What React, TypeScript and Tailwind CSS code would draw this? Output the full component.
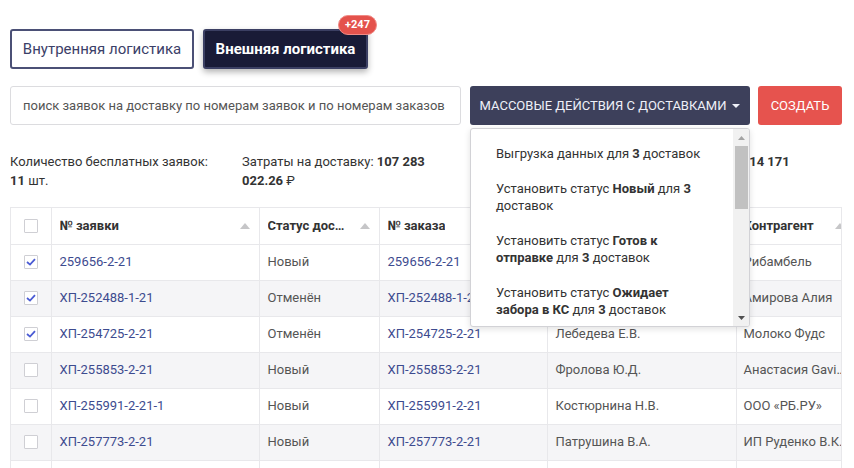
// Deliveries list: logistics tabs, search + bulk actions dropdown, stats and table.

import type { ReactNode } from 'react'

type Row = {
  id: string
  status: string
  order: string
  courier: string
  agent: string
  checked: boolean
}

const ROWS: Row[] = [
  { id: '259656-2-21', status: 'Новый', order: '259656-2-21', courier: 'Сидорова А.А.', agent: 'Рибамбель', checked: true },
  { id: 'ХП-252488-1-21', status: 'Отменён', order: 'ХП-252488-1-21', courier: 'Иванова М.С.', agent: 'Амирова Алия', checked: true },
  { id: 'ХП-254725-2-21', status: 'Отменён', order: 'ХП-254725-2-21', courier: 'Лебедева Е.В.', agent: 'Молоко Фудс', checked: true },
  { id: 'ХП-255853-2-21', status: 'Новый', order: 'ХП-255853-2-21', courier: 'Фролова Ю.Д.', agent: 'Анастасия Gavi…', checked: false },
  { id: 'ХП-255991-2-21-1', status: 'Новый', order: 'ХП-255991-2-21', courier: 'Костюрнина Н.В.', agent: 'ООО «РБ.РУ»', checked: false },
  { id: 'ХП-257773-2-21', status: 'Новый', order: 'ХП-257773-2-21', courier: 'Патрушина В.А.', agent: 'ИП Руденко В.К.', checked: false },
  { id: 'ХП-258112-1-21', status: 'Новый', order: 'ХП-258112-1-21', courier: 'Орлова Т.И.', agent: 'ООО «Лето»', checked: false },
]

const COLUMNS = [
  { key: 'id', label: '№ заявки', w: 'w-[208px]', pad: 'pl-[8px]', sort: true },
  { key: 'status', label: 'Статус дос…', w: 'w-[120px]', pad: 'pl-[8px]', sort: true },
  { key: 'order', label: '№ заказа', w: 'w-[168px]', pad: 'pl-[8px]', sort: false },
  { key: 'courier', label: 'Получатель', w: 'w-[189px]', pad: 'pl-[8px]', sort: true },
  { key: 'agent', label: 'Контрагент', w: 'w-[118px]', pad: 'pl-[7px]', sort: true },
]

function SortArrow() {
  return (
    <svg width="10" height="6" viewBox="0 0 10 6" className="shrink-0">
      <path d="M5 0 L10 6 L0 6 Z" fill="#c6c6c8" />
    </svg>
  )
}

function Checkbox({ checked }: { checked?: boolean }) {
  return (
    <div className="w-[14px] h-[14px] border border-[#cfcfd4] rounded-[1px] bg-white flex items-center justify-center">
      {checked && (
        <svg width="10" height="8" viewBox="0 0 10 8">
          <path d="M1 4 L4 6.6 L9 1.2" fill="none" stroke="#4a5bd4" strokeWidth="1.8" />
        </svg>
      )}
    </div>
  )
}

function MenuItem({ children }: { children: ReactNode }) {
  return <div className="px-[25px] py-[9px] leading-[17px] cursor-pointer hover:bg-[#f4f4f6]">{children}</div>
}

function BulkMenu() {
  return (
    <div className="absolute left-0 top-[42px] w-[280px] h-[199px] bg-white border border-[#d2d2d6] rounded-[3px] shadow-[0_2px_6px_rgba(0,0,0,0.12)] flex overflow-hidden z-10 text-left normal-case">
      <div className="flex-1 overflow-hidden pt-[7px] text-[13px] text-[#333] font-normal">
        <MenuItem>Выгрузка данных для <b>3</b> доставок</MenuItem>
        <MenuItem>Установить статус <b>Новый</b> для <b>3</b> доставок</MenuItem>
        <MenuItem>Установить статус <b>Готов к отправке</b> для <b>3</b> доставок</MenuItem>
        <MenuItem>Установить статус <b>Ожидает забора в КС</b> для <b>3</b> доставок</MenuItem>
        <MenuItem>Установить статус <b>Отменён</b> для <b>3</b> доставок</MenuItem>
      </div>
      {/* fake scrollbar */}
      <div className="w-[16px] bg-[#f1f1f1] flex flex-col items-center">
        <div className="h-[17px] flex items-center justify-center">
          <svg width="7" height="4" viewBox="0 0 7 4"><path d="M3.5 0 L7 4 L0 4 Z" fill="#a3a3a3" /></svg>
        </div>
        <div className="w-[13px] h-[63px] bg-[#c1c1c1]" />
        <div className="flex-1" />
        <div className="h-[17px] flex items-center justify-center">
          <svg width="7" height="4" viewBox="0 0 7 4"><path d="M0 0 L7 0 L3.5 4 Z" fill="#505050" /></svg>
        </div>
      </div>
    </div>
  )
}

export default function App() {
  return (
    <div className="bg-white w-[854px] h-[468px] overflow-hidden pl-[10px] pt-[29px] font-['Roboto','Liberation_Sans',sans-serif] text-[#333]">
      {/* Tabs */}
      <div className="flex gap-[9px]">
        <button className="w-[184px] h-[40px] border-2 border-[#4b5076] rounded-[3px] bg-white text-[15px] text-[#3b4068]">
          Внутренняя логистика
        </button>
        <button className="relative w-[165px] h-[40px] border-2 border-[#3b3f63] rounded-[3px] bg-[#191b37] text-[15px] font-bold text-white shadow-[0_3px_6px_rgba(0,0,0,0.3)]">
          Внешняя логистика
          <span className="absolute right-[-11px] top-[-16px] h-[20px] px-[6px] rounded-full bg-[#e4524c] text-white text-[11px] font-bold leading-[18px] border border-[#f08a85]">
            +247
          </span>
        </button>
      </div>

      {/* Search + actions */}
      <div className="flex mt-[17px] h-[39px]">
        <input
          placeholder="поиск заявок на доставку по номерам заявок и по номерам заказов"
          className="w-[451px] h-[39px] border border-[#dcdcdf] rounded-[3px] px-[12px] text-[13px] placeholder:text-[#555] outline-none"
        />
        <div className="relative ml-[9px]">
          <button className="w-[280px] h-[39px] rounded-[3px] bg-[#3d405b] text-[#eef0f8] text-[13px] flex items-center justify-center gap-[6px]">
            МАССОВЫЕ ДЕЙСТВИЯ С ДОСТАВКАМИ
            <svg width="8" height="4" viewBox="0 0 8 4"><path d="M0 0 L8 0 L4 4 Z" fill="#eef0f8" /></svg>
          </button>
          <BulkMenu />
        </div>
        <button className="ml-[8px] w-[84px] h-[39px] rounded-[3px] bg-[#e6534e] text-white text-[13px]">СОЗДАТЬ</button>
      </div>

      {/* Stats */}
      <div className="grid grid-cols-[232px_228px_340px] mt-[27px] text-[13px] leading-[19px] text-[#333]">
        <div className="pr-[22px]">Количество бесплатных заявок: <b>11</b> шт.</div>
        <div className="pr-[22px]">Затраты на доставку: <b>107 283 022.26</b> ₽</div>
        <div className="pl-[2px] pr-[10px]">
          <span className="whitespace-nowrap">Затраты на доставку по тарифам ТК за год: <b>114 171</b></span> <b>058.40</b> ₽
        </div>
      </div>

      {/* Table */}
      <div className="mt-[17px] w-[832px] overflow-hidden border-l border-t border-r border-[#e8e8eb]">
        <table className="table-fixed border-collapse w-[843px] text-[13px]">
          <thead>
            <tr className="h-[36px]">
              <th className="w-[40px] border-r border-b border-[#e8e8eb]">
                <div className="flex justify-center"><Checkbox /></div>
              </th>
              {COLUMNS.map(c => (
                <th key={c.key} className={`${c.w} ${c.pad} border-r border-b border-[#e8e8eb] pr-[9px] text-left font-bold text-[#333]`}>
                  <div className="flex items-center justify-between gap-1">
                    <span className="truncate">{c.label}</span>
                    {c.sort && <SortArrow />}
                  </div>
                </th>
              ))}
            </tr>
          </thead>
          <tbody>
            {ROWS.map((r, i) => (
              <tr key={r.id} className={`h-[36px] ${i % 2 === 1 ? 'bg-[#f5f5f7]' : 'bg-white'}`}>
                <td className="border-r border-b border-[#e8e8eb]">
                  <div className="flex justify-center"><Checkbox checked={r.checked} /></div>
                </td>
                <td className="border-r border-b border-[#e8e8eb] pl-[8px] text-[#3d4b8f] truncate">{r.id}</td>
                <td className="border-r border-b border-[#e8e8eb] pl-[8px] text-[#555] truncate">{r.status}</td>
                <td className="border-r border-b border-[#e8e8eb] pl-[8px] text-[#3d4b8f] truncate">{r.order}</td>
                <td className="border-r border-b border-[#e8e8eb] pl-[8px] text-[#555] truncate">{r.courier}</td>
                <td className="border-r border-b border-[#e8e8eb] pl-[7px] pr-[8px] text-[#555] whitespace-nowrap overflow-hidden">{r.agent}</td>
              </tr>
            ))}
          </tbody>
        </table>
      </div>
    </div>
  )
}
